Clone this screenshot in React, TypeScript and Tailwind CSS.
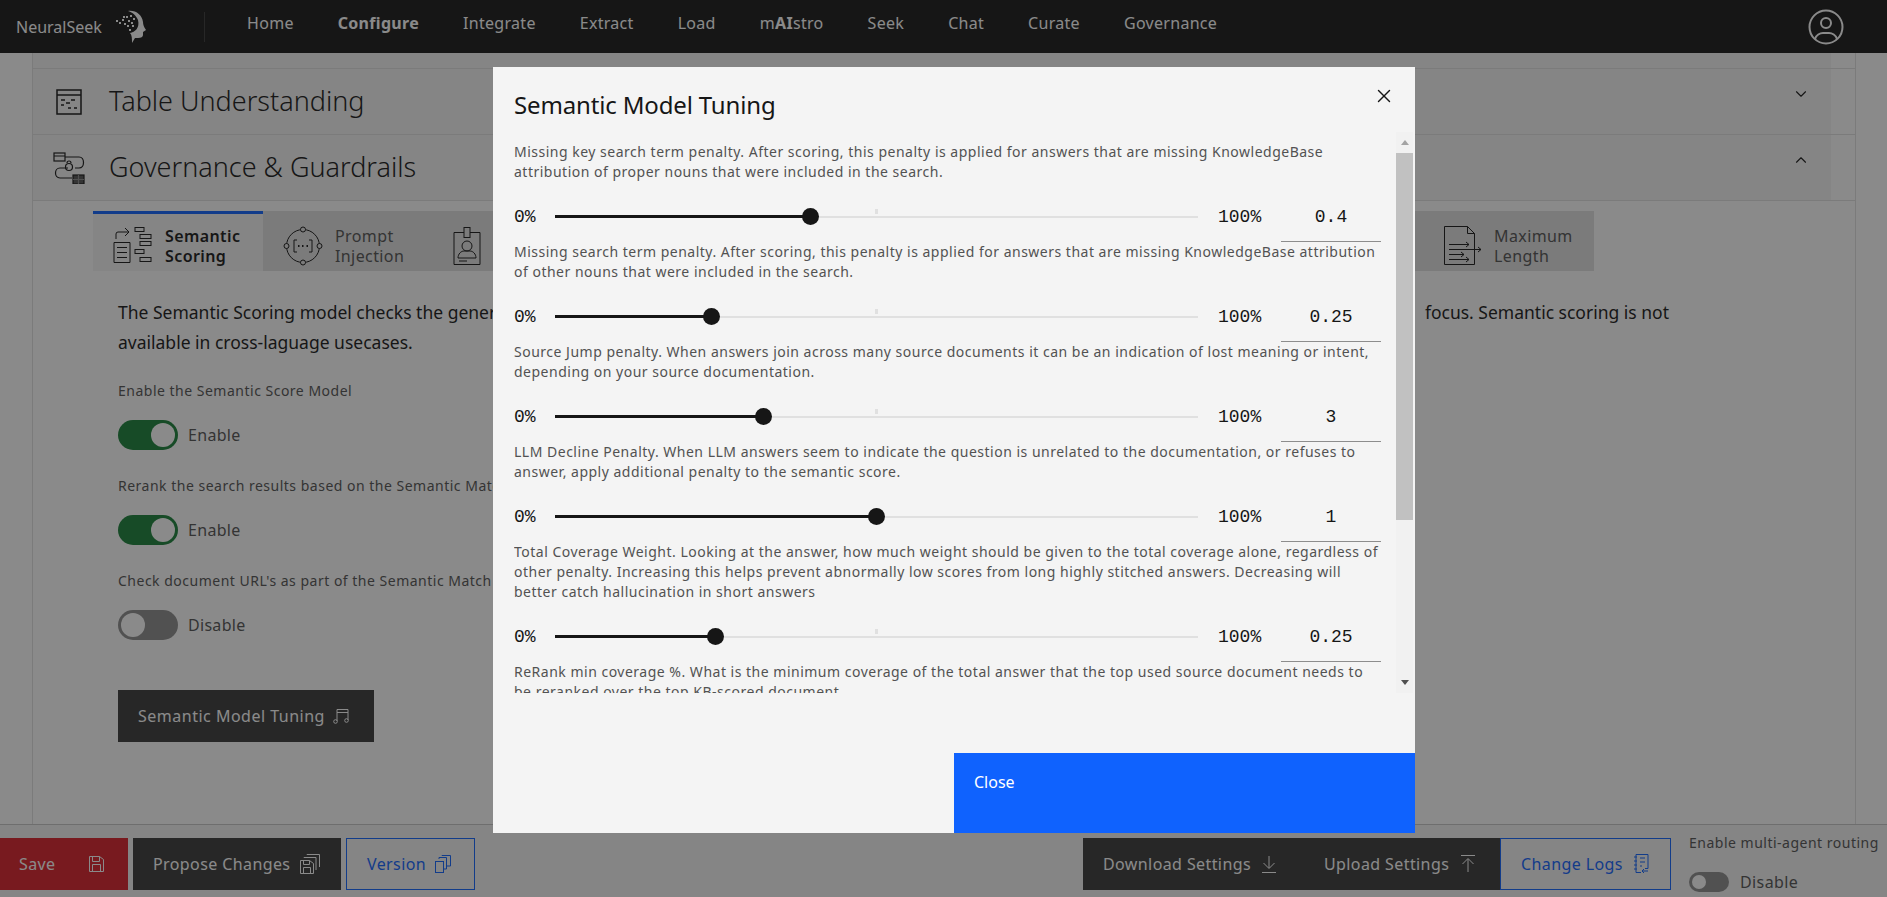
import { ChevronDown, ChevronUp, X } from "lucide-react";

const navItems = ["Home", "Configure", "Integrate", "Extract", "Load", "mAIstro", "Seek", "Chat", "Curate", "Governance"];

const tuning = [
  {
    lines: [
      "Missing key search term penalty. After scoring, this penalty is applied for answers that are missing KnowledgeBase",
      "attribution of proper nouns that were included in the search.",
    ],
    value: "0.4",
    pos: 39.8,
  },
  {
    lines: [
      "Missing search term penalty. After scoring, this penalty is applied for answers that are missing KnowledgeBase attribution",
      "of other nouns that were included in the search.",
    ],
    value: "0.25",
    pos: 24.4,
  },
  {
    lines: [
      "Source Jump penalty. When answers join across many source documents it can be an indication of lost meaning or intent,",
      "depending on your source documentation.",
    ],
    value: "3",
    pos: 32.5,
  },
  {
    lines: [
      "LLM Decline Penalty. When LLM answers seem to indicate the question is unrelated to the documentation, or refuses to",
      "answer, apply additional penalty to the semantic score.",
    ],
    value: "1",
    pos: 50,
  },
  {
    lines: [
      "Total Coverage Weight. Looking at the answer, how much weight should be given to the total coverage alone, regardless of",
      "other penalty. Increasing this helps prevent abnormally low scores from long highly stitched answers. Decreasing will",
      "better catch hallucination in short answers",
    ],
    value: "0.25",
    pos: 25,
  },
];

function Lines({ lines }: { lines: string[] }) {
  return (
    <div className="text-sm leading-5 tracking-[0.5px] text-[#525252] whitespace-nowrap">
      {lines.map((line) => (
        <p key={line}>{line}</p>
      ))}
    </div>
  );
}

function Slider({ value, pos }: { value: string; pos: number }) {
  return (
    <div className="flex items-center h-[60px] pt-[10px] font-['Liberation_Mono',monospace] text-lg text-[#161616]">
      <span className="w-[41px]">0%</span>
      <div className="relative w-[643px] h-[2px] bg-[#e0e0e0]">
        <div className="absolute left-0 top-[-1px] h-[3px] bg-[#161616]" style={{ width: `${pos}%` }} />
        <div className="absolute left-1/2 top-[-7px] -ml-[2px] w-[3px] h-[5px] bg-[#e0e0e0]" />
        <div
          className="absolute top-[-8px] w-[17px] h-[17px] -ml-[9px] rounded-full bg-[#161616]"
          style={{ left: `${pos}%` }}
        />
      </div>
      <span className="ml-[20px] w-[63px]">100%</span>
      <div className="w-[100px] h-[50px] flex items-center justify-center border-b border-[#8d8d8d]">{value}</div>
    </div>
  );
}

function Toggle({ on, label }: { on: boolean; label: string }) {
  return (
    <div className="flex items-center gap-[10px]">
      <div
        className={`flex w-[60px] h-[30px] rounded-full items-center px-[3px] ${
          on ? "bg-[#198038] justify-end" : "bg-[#8d8d8d] justify-start"
        }`}
      >
        <div className="w-[24px] h-[24px] rounded-full bg-white" />
      </div>
      <span className="text-base tracking-[0.3px] text-[#525252]">{label}</span>
    </div>
  );
}

function Logo() {
  return (
    <svg width="32" height="34" viewBox="0 0 32 34" fill="none">
      <path
        d="M14 1c8-1 14 4 15 11 0 3 1 5 3 8l-3 2 0 3c0 2-2 3-5 3l-3 0-3 5c0-4 0-8-2-10 5-1 10-5 8-13-2-5-6-8-10-9z"
        fill="#fff"
      />
      {[[8, 9], [12, 6], [16, 5], [19, 8], [14, 10], [10, 13], [17, 12], [5, 12], [13, 15], [18, 15], [9, 6], [15, 19], [2, 10]].map(([x, y]) => (
        <rect key={`${x}-${y}`} x={x} y={y} width="2" height="2" fill="#fff" />
      ))}
    </svg>
  );
}

function Avatar() {
  return (
    <svg width="36" height="36" viewBox="0 0 36 36" fill="none" stroke="#fff" strokeWidth="2">
      <circle cx="18" cy="18" r="16.5" />
      <circle cx="18" cy="14" r="5" />
      <path d="M7 30c1-4 5-6 8-6h6c3 0 7 2 8 6" />
    </svg>
  );
}

function TableIcon() {
  return (
    <svg width="26" height="26" viewBox="0 0 26 26" fill="none" stroke="#161616" strokeWidth="1.5">
      <rect x="1" y="1" width="24" height="24" />
      <path d="M1 6h24M5 11h4M15 11h4M10 14h4M5 16h3M12 19h3M18 19h3" />
    </svg>
  );
}

function GovernanceIcon() {
  return (
    <svg width="32" height="32" viewBox="0 0 32 32" fill="none" stroke="#161616" strokeWidth="1.2">
      <rect x="1" y="1" width="11" height="8" />
      <path d="M1 4h11M12 5h14c6 0 6 11 0 11h-4M15 16H7c-6 0-6 10 0 10h12" />
      <circle cx="16" cy="15" r="3.5" />
      <path d="M14 11a2 2 0 0 1 4 0" />
      <rect x="20" y="23" width="11" height="9" fill="#525252" />
      <path d="M20 27.500h11M25.500 23v9" stroke="#8a8a8a" />
    </svg>
  );
}

function ScoringIcon() {
  return (
    <svg width="40" height="40" viewBox="0 0 40 40" fill="none" stroke="#161616" strokeWidth="1">
      <path d="M3 13V8a2 2 0 0 1 2-2h11M12 2l4 4-4 4" />
      <path d="M1 16.500h16v20H1zM4 21.500h10M4 26.500h10M4 31.500h10" />
      <rect x="22" y="1.500" width="9" height="4" />
      <rect x="27" y="8.500" width="11" height="4" />
      <rect x="27" y="15.500" width="11" height="4" />
      <rect x="22" y="23.500" width="9" height="4" />
      <rect x="27" y="31.500" width="11" height="4" />
    </svg>
  );
}

function InjectionIcon() {
  return (
    <svg width="40" height="40" viewBox="0 0 40 40" fill="none" stroke="#161616" strokeWidth="1">
      <circle cx="20" cy="20" r="16.500" />
      <circle cx="20" cy="3.500" r="2.500" fill="#e0e0e0" />
      <circle cx="20" cy="36.500" r="2.500" fill="#e0e0e0" />
      <circle cx="3.500" cy="20" r="2.500" fill="#e0e0e0" />
      <circle cx="36.500" cy="20" r="2.500" fill="#e0e0e0" />
      <path d="M14 14h-3v12h3M26 14h3v12h-3" />
      <path d="M15 20h1.500M19 20h1.500M23.500 20h1.500" strokeWidth="2" />
    </svg>
  );
}

function BadgeIcon() {
  return (
    <svg width="28" height="40" viewBox="0 0 28 40" fill="none" stroke="#161616" strokeWidth="1">
      <path d="M1 6.500h26v32H1z" />
      <rect x="11" y="1.500" width="6" height="10" fill="#e0e0e0" />
      <circle cx="14" cy="20" r="5" />
      <path d="M5 32c0-4 3-7 6-7h6c3 0 6 3 6 7H5zM6 35h8" />
    </svg>
  );
}

function LengthIcon() {
  return (
    <svg width="38" height="40" viewBox="0 0 38 40" fill="none" stroke="#161616" strokeWidth="1">
      <path d="M.500 .500h23l7 7v31H.500zM23.500 .500v7h7" />
      <path d="M5 18.500h20M22 16l3 2.500-3 2.500M5 23.500h32M34 21l3 2.500-3 2.500M5 28.500h15M17 26l3 2.500-3 2.500M5 33.500h20M22 31l3 2.500-3 2.500" />
    </svg>
  );
}

function Tab({ icon, title, sub, active }: { icon: React.ReactNode; title: string; sub: string; active?: boolean }) {
  return (
    <div
      className={`flex items-center w-[170px] h-[60px] pl-5 gap-3 text-base leading-5 tracking-[0.4px] ${
        active
          ? "bg-[#f4f4f4] border-t-[3px] border-[#0f62fe] pt-[7px] font-semibold text-[#161616]"
          : "bg-[#e0e0e0] pt-[10px] text-[#525252]"
      }`}
    >
      {icon}
      <div>
        <p>{title}</p>
        <p>{sub}</p>
      </div>
    </div>
  );
}

function FloppyIcon({ stacked }: { stacked?: boolean }) {
  return (
    <svg width={stacked ? 20 : 16} height="20" viewBox={stacked ? "0 0 20 20" : "0 0 16 20"} fill="none" stroke="#fff">
      {stacked ? (
        <path d="M.500 6.500h9l4 3v10H.500zM3.500 6.500v4h6v-4M3.500 19.500v-6h7v6M4 4V3.500h12V16M7 1V.500h12.500V13" />
      ) : (
        <path d="M.500 2.500h10l4 3v12H.500zM3.500 2.500v5h7v-5M3.500 17.500v-7h8v7" />
      )}
    </svg>
  );
}

function CopyIcon() {
  return (
    <svg width="16" height="18" viewBox="0 0 16 18" fill="none" stroke="#0f62fe">
      <rect x=".500" y="6.500" width="8" height="11" />
      <path d="M4 4V2.500h7.500V14H9M7 1V.500h8.500V11H12" />
    </svg>
  );
}

function DownloadIcon() {
  return (
    <svg width="16" height="18" viewBox="0 0 16 18" fill="none" stroke="#fff">
      <path d="M8 1v12M2.500 8 8 13.500 13.500 8M1 17.500h14" />
    </svg>
  );
}

function UploadIcon() {
  return (
    <svg width="16" height="18" viewBox="0 0 16 18" fill="none" stroke="#fff">
      <path d="M8 17V4M2.500 9 8 3.500 13.500 9M1 .500h14" />
    </svg>
  );
}

function LogsIcon() {
  return (
    <svg width="16" height="20" viewBox="0 0 16 20" fill="none" stroke="#0f62fe">
      <path d="M3 .500h12v14h-3M8 18.500H3v-18M1 3h3M1 7h3M1 11h3M1 15h3M7 4h5M7 8h5M7 12h2M15 17H9M11 15l-2 2 2 2" />
    </svg>
  );
}

function MusicIcon() {
  return (
    <svg width="16" height="16" viewBox="0 0 16 16" fill="none" stroke="#fff">
      <path d="M4 13V1.500h11V12M4 4.500h11" />
      <circle cx="2.500" cy="13.500" r="1.800" />
      <circle cx="13.500" cy="12.500" r="1.800" />
    </svg>
  );
}

export default function App() {
  return (
    <div className="relative flex flex-col w-full h-[897px] overflow-hidden bg-white font-['Noto_Sans',sans-serif]">
      <header className="flex items-center shrink-0 h-[53px] bg-[#161616] text-white">
        <div className="flex items-center w-[205px] h-[30px] pl-4 gap-3 border-r border-[#393939]">
          <span className="text-base">NeuralSeek</span>
          <Logo />
        </div>
        <nav className="flex ml-5 pb-2 text-base tracking-[0.3px]">
          {navItems.map((item) => (
            <span key={item} className={`px-[22px] ${item === "Configure" ? "font-bold" : ""}`}>
              {item === "mAIstro" ? (
                <>
                  m<b>AI</b>stro
                </>
              ) : (
                item
              )}
            </span>
          ))}
        </nav>
        <div className="ml-auto mr-[43px]">
          <Avatar />
        </div>
      </header>

      <main className="flex-1 ml-8 w-[1824px] border-x border-[#e0e0e0]">
        <div className="w-[1798px] h-[15px] bg-[#f4f4f4]" />
        <div className="flex items-center h-[67px] border-y border-[#e0e0e0]">
          <div className="flex items-center w-[1798px] h-full bg-[#f4f4f4] pl-[23px] pr-[21px]">
            <TableIcon />
            <h2 className="ml-[27px] text-[27px] font-light text-[#161616]">Table Understanding</h2>
            <ChevronDown size={18} strokeWidth={1.5} className="ml-auto -mt-4 text-[#161616]" />
          </div>
        </div>
        <div className="flex items-center h-[66px] border-b border-[#e0e0e0]">
          <div className="flex items-center w-[1798px] h-full bg-[#f4f4f4] pl-[20px] pr-[21px]">
            <GovernanceIcon />
            <h2 className="ml-[24px] text-[27px] font-light text-[#161616]">Governance &amp; Guardrails</h2>
            <ChevronUp size={18} strokeWidth={1.5} className="ml-auto -mt-4 text-[#161616]" />
          </div>
        </div>

        <div className="flex mt-[10px] ml-[60px] w-[1501px]">
          <Tab icon={<ScoringIcon />} title="Semantic" sub="Scoring" active />
          <Tab icon={<InjectionIcon />} title="Prompt" sub="Injection" />
          <div className="flex-1 bg-[#e0e0e0] pl-5 pt-[15px]">
            <BadgeIcon />
          </div>
          <Tab icon={<LengthIcon />} title="Maximum" sub="Length" />
        </div>

        <div className="ml-[85px] w-[1551px] mt-[26px]">
          <div className="text-[17.5px] leading-[30px] text-[#161616]">
            <p className="flex justify-between">
              <span>The Semantic Scoring model checks the generated</span>
              <span>focus. Semantic scoring is not</span>
            </p>
            <p>available in cross-laguage usecases.</p>
          </div>
          <p className="mt-[24px] text-sm leading-5 tracking-[0.5px] text-[#525252]">Enable the Semantic Score Model</p>
          <div className="mt-[19px]">
            <Toggle on label="Enable" />
          </div>
          <p className="mt-[26px] text-sm leading-5 tracking-[0.5px] text-[#525252]">
            Rerank the search results based on the Semantic Match
          </p>
          <div className="mt-[19px]">
            <Toggle on label="Enable" />
          </div>
          <p className="mt-[26px] text-sm leading-5 tracking-[0.5px] text-[#525252]">
            Check document URL's as part of the Semantic Match
          </p>
          <div className="mt-[19px]">
            <Toggle on={false} label="Disable" />
          </div>
          <button className="flex items-center gap-2 mt-[50px] h-[52px] w-[256px] px-5 bg-[#393939] text-white text-base tracking-[0.5px] whitespace-nowrap">
            Semantic Model Tuning
            <MusicIcon />
          </button>
        </div>
      </main>

      <footer className="flex shrink-0 h-[73px] pt-[13px] bg-[#f4f4f4] border-t border-[#c6c6c6] text-base tracking-[0.4px]">
        <div className="flex gap-[5px]">
          <button className="flex items-center justify-between w-[128px] h-[52px] pl-[19px] pr-[23px] bg-[#da1e28] text-white">
            Save
            <FloppyIcon />
          </button>
          <button className="flex items-center justify-between w-[208px] h-[52px] pl-5 pr-[21px] bg-[#393939] text-white">
            Propose Changes
            <FloppyIcon stacked />
          </button>
          <button className="flex items-center justify-between w-[129px] h-[52px] pl-5 pr-[23px] border border-[#0f62fe] text-[#0f62fe]">
            Version
            <CopyIcon />
          </button>
        </div>
        <div className="flex ml-[608px]">
          <div className="flex h-[52px] bg-[#393939] text-white">
            <button className="flex items-center gap-[10px] pl-5 w-[221px]">
              Download Settings
              <DownloadIcon />
            </button>
            <button className="flex items-center gap-[11px] pl-5 w-[196px]">
              Upload Settings
              <UploadIcon />
            </button>
          </div>
          <button className="flex items-center gap-[10px] w-[171px] h-[52px] pl-5 border border-[#0f62fe] text-[#0f62fe]">
            Change Logs
            <LogsIcon />
          </button>
        </div>
        <div className="ml-[18px]">
          <p className="text-sm leading-5 tracking-[0.5px] text-[#525252] -mt-[5px] whitespace-nowrap">Enable multi-agent routing</p>
          <div className="flex items-center gap-[11px] mt-[17px]">
            <div className="flex items-center w-[40px] h-[20px] px-[3px] rounded-full bg-[#8d8d8d]">
              <div className="w-[14px] h-[14px] rounded-full bg-white" />
            </div>
            <span className="text-[#525252]">Disable</span>
          </div>
        </div>
      </footer>

      <div className="absolute inset-0 bg-[#161616]/50 pl-[493px] pt-[67px]">
        <div className="flex flex-col w-[922px] h-[766px] bg-[#f4f4f4]">
          <div className="flex justify-between shrink-0 h-[65px] pl-[21px] pr-[20px]">
            <h3 className="pt-[22px] text-2xl leading-8 tracking-[-0.15px] text-[#161616]">Semantic Model Tuning</h3>
            <X size={22} strokeWidth={1.5} className="mt-[18px] text-[#161616]" />
          </div>
          <div className="flex h-[561px] pl-[21px] pr-[2px]">
            <div className="w-[882px] pt-[10px] overflow-hidden">
              {tuning.map((item) => (
                <div key={item.lines[0]}>
                  <Lines lines={item.lines} />
                  <Slider value={item.value} pos={item.pos} />
                </div>
              ))}
              <Lines
                lines={[
                  "ReRank min coverage %. What is the minimum coverage of the total answer that the top used source document needs to",
                  "be reranked over the top KB-scored document.",
                ]}
              />
            </div>
            <div className="flex flex-col items-center w-[17px] bg-[#f1f1f1]">
              <div className="flex items-center justify-center shrink-0 h-[21px]">
                <div className="w-0 h-0 border-x-[4px] border-x-transparent border-b-[5px] border-b-[#a3a3a3]" />
              </div>
              <div className="w-full h-[367px] bg-[#c1c1c1]" />
              <div className="flex items-center justify-center mt-auto h-[21px]">
                <div className="w-0 h-0 border-x-[4px] border-x-transparent border-t-[5px] border-t-[#505050]" />
              </div>
            </div>
          </div>
          <div className="flex justify-end mt-auto">
            <button className="flex w-[461px] h-[80px] pl-5 pt-[17px] bg-[#0f62fe] text-white text-base">Close</button>
          </div>
        </div>
      </div>
    </div>
  );
}
